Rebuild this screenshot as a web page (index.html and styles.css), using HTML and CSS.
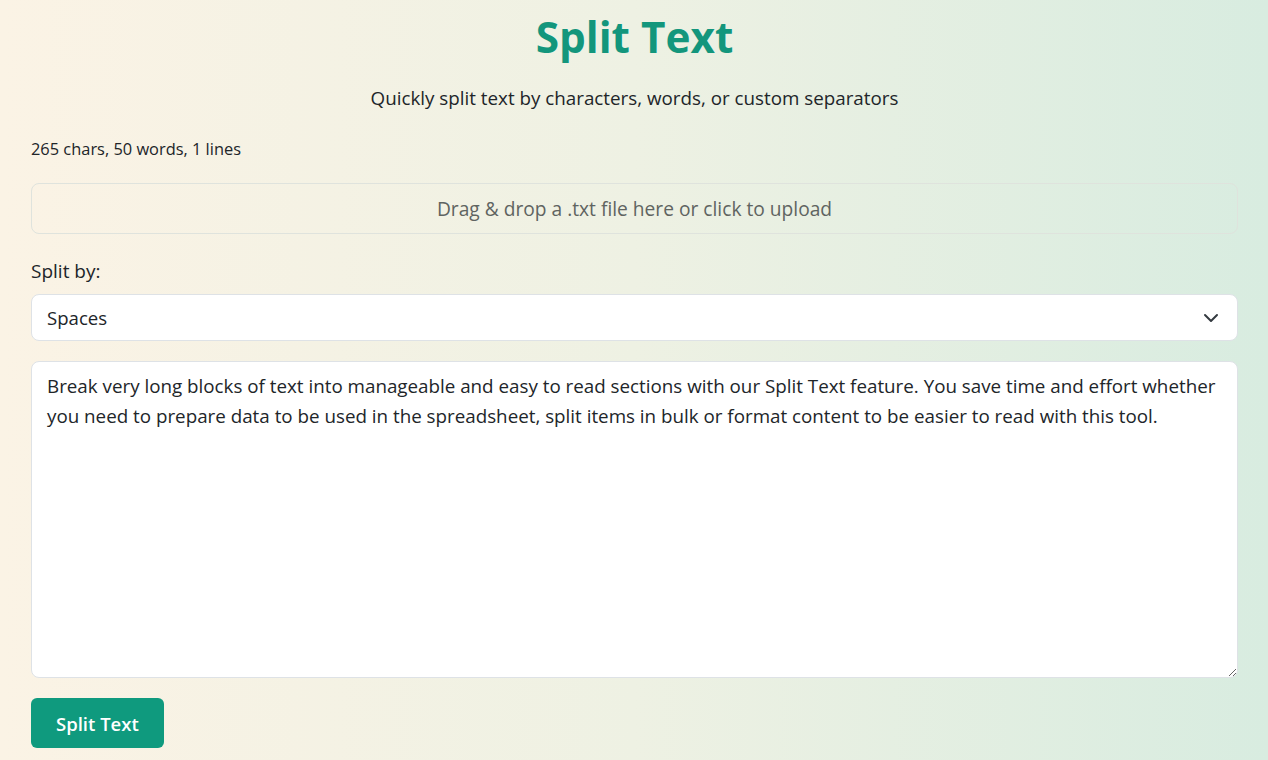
FILE: index.html
```html
<!DOCTYPE html>
<html lang="en">
<head>
<meta charset="utf-8">
<title>Split Text</title>
<link rel="stylesheet" href="styles.css">
</head>
<body>
<main class="page">
  <h1 class="title">Split Text</h1>
  <p class="subtitle">Quickly split text by characters, words, or custom separators</p>
  <div class="stats">265 chars, 50 words, 1 lines</div>
  <div class="dropzone">Drag &amp; drop a .txt file here or click to upload</div>
  <label class="label" for="mode">Split by:</label>
  <div class="select">
    <span>Spaces</span>
    <svg class="chev" width="16" height="16" viewBox="0 0 16 16"><path d="M2 5l6 6 6-6" fill="none" stroke="#343a40" stroke-width="2" stroke-linecap="round" stroke-linejoin="round"/></svg>
  </div>
  <textarea class="input">Break very long blocks of text into manageable and easy to read sections with our Split Text feature. You save time and effort whether you need to prepare data to be used in the spreadsheet, split items in bulk or format content to be easier to read with this tool.</textarea>
  <div class="actions"><button class="btn">Split Text</button></div>
</main>
</body>
</html>
```
FILE: styles.css
```css
* { box-sizing: border-box; }
html, body { margin: 0; height: 100%; }
body {
  background: linear-gradient(to right, #fbf3e5 0%, #eef1e3 50%, #d8ece0 100%);
  font-family: "Open Sans", "Noto Sans", sans-serif;
  color: #212529;
  overflow: hidden;
}
.page {
  padding: 0 30px 0 31px;
  display: flex;
  flex-direction: column;
}
.title {
  margin: 10px 0 0;
  text-align: center;
  font-size: 42.3px;
  line-height: 54px;
  font-weight: 700;
  color: #13967c;
}
.subtitle {
  margin: 21px 0 0;
  text-align: center;
  font-size: 18.8px;
  line-height: 26px;
}
.stats {
  margin-top: 27px;
  font-size: 16.4px;
  line-height: 22px;
}
.dropzone {
  margin-top: 23px;
  height: 51px;
  border: 1px solid #dfe3dd;
  border-radius: 8px;
  display: flex;
  align-items: center;
  justify-content: center;
  font-size: 19.2px;
  color: #5f6461;
}
.label {
  margin-top: 23px;
  font-size: 19px;
  line-height: 28px;
}
.select {
  margin-top: 9px;
  height: 47px;
  background: #fff;
  border: 1px solid #dee2e6;
  border-radius: 8px;
  display: flex;
  align-items: center;
  justify-content: space-between;
  padding: 0 18px 0 15px;
  font-size: 18.6px;
}
.input {
  margin-top: 20px;
  height: 317px;
  background: #fff;
  border: 1px solid #dee2e6;
  border-radius: 8px;
  padding: 9px 15px;
  font-family: inherit;
  font-size: 18.8px;
  line-height: 30px;
  color: #212529;
  resize: vertical;
  outline: none;
}
.actions { margin-top: 20px; }
.btn {
  height: 50px;
  padding: 0 25px;
  background: #0f9a7e;
  color: #fff;
  border: none;
  border-radius: 6px;
  font-family: inherit;
  font-size: 18.5px;
  font-weight: 600;
}
```
